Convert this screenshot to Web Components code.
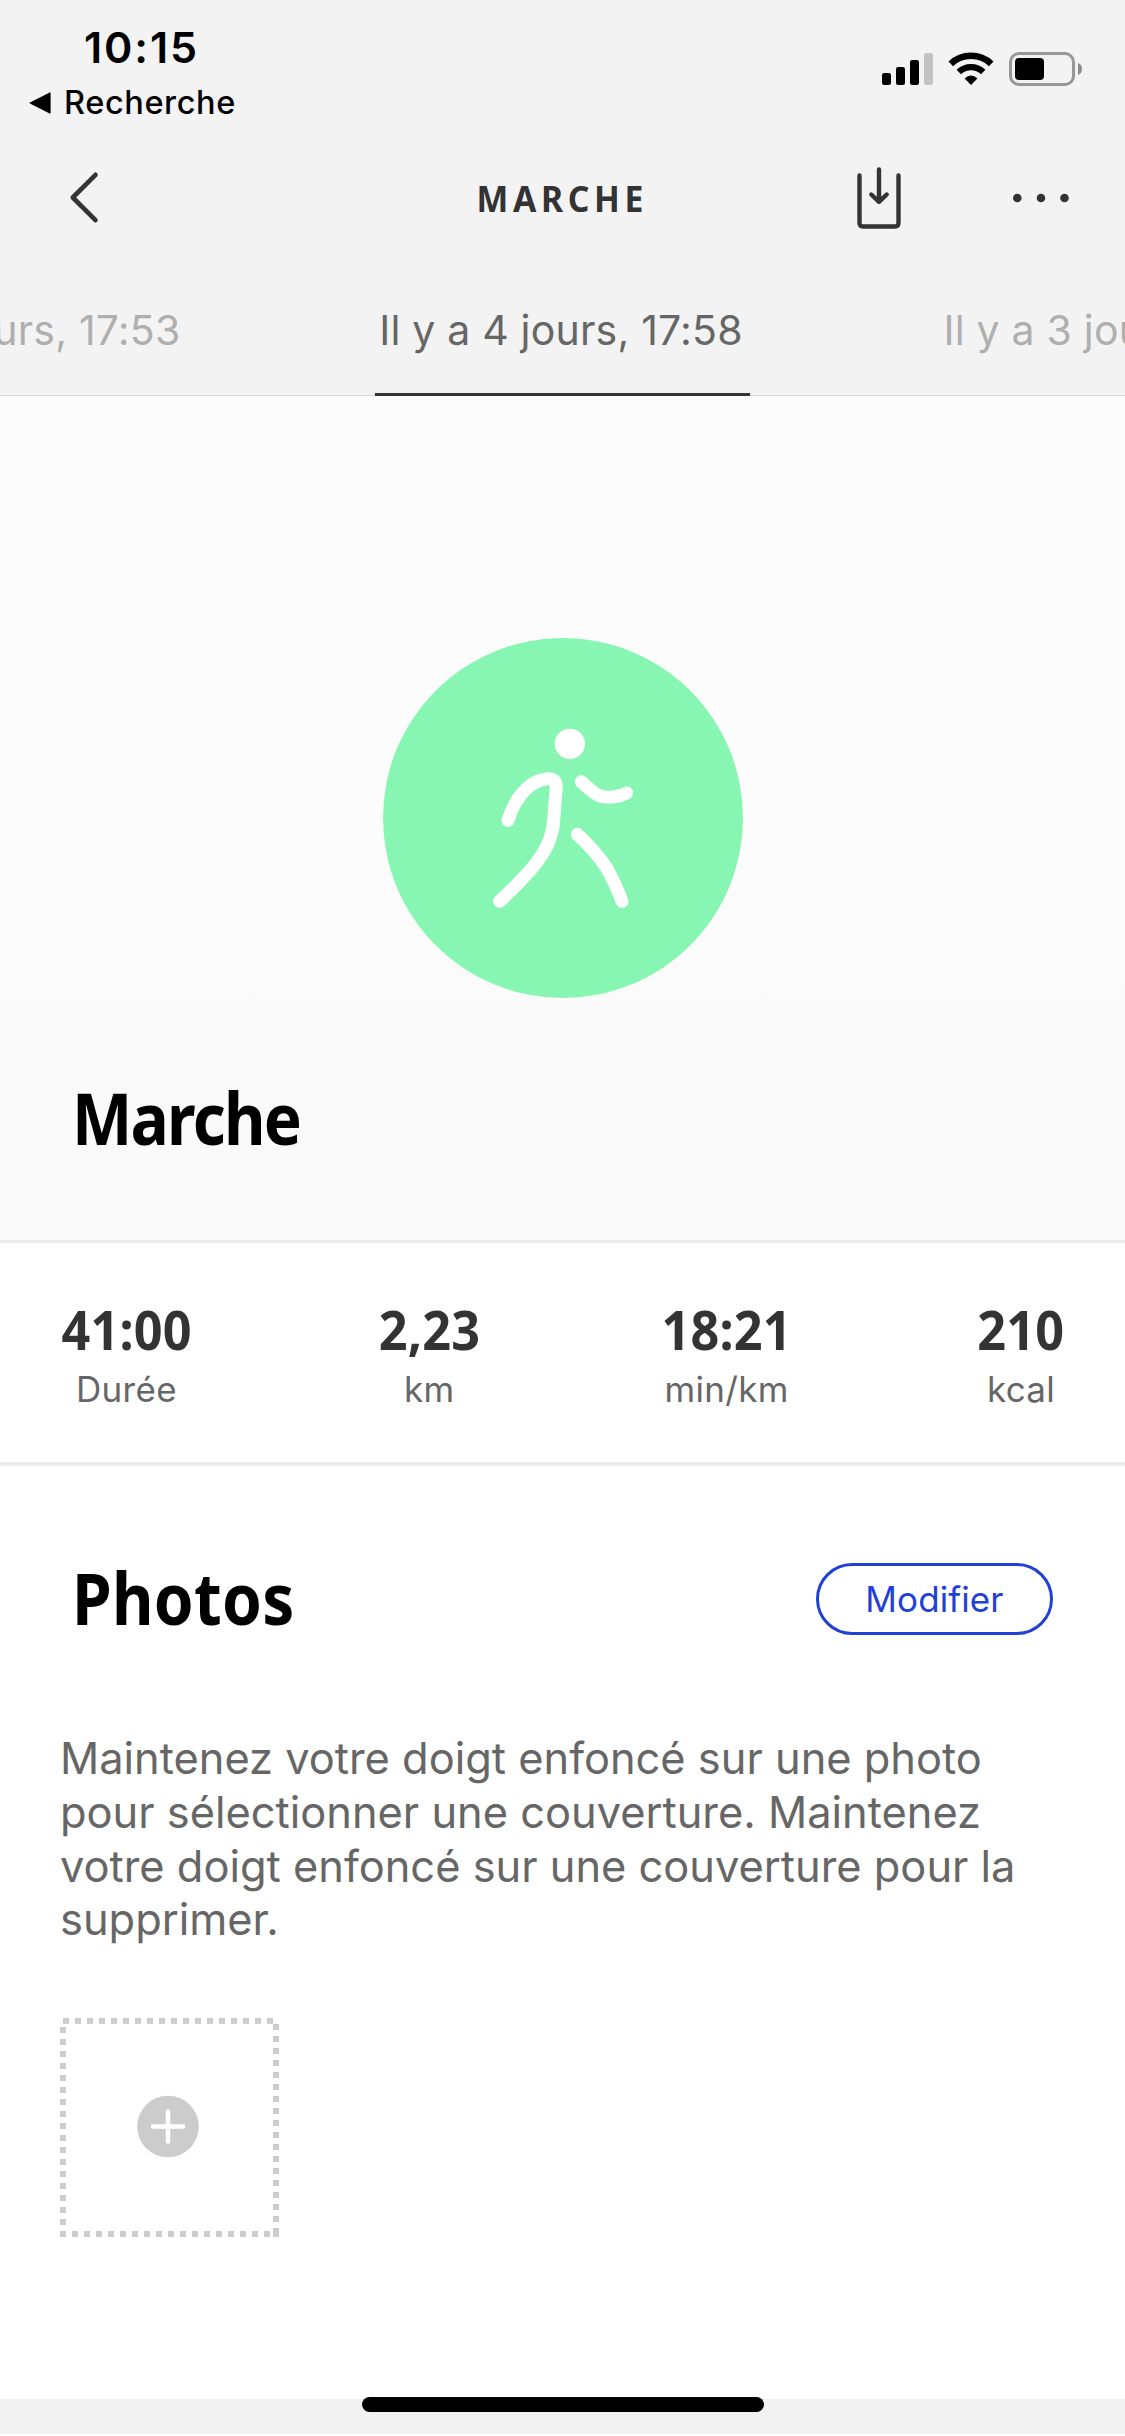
<!DOCTYPE html>
<html lang="fr">
<head>
<meta charset="utf-8">
<title>Marche</title>
<style>
  html, body { margin: 0; background: #fff; }
  body { width: 1125px; height: 2436px; overflow: hidden; font-family: Inter, "Liberation Sans", sans-serif; }
</style>
</head>
<body>
<activity-screen></activity-screen>
<script>
const define = (name, html, setup) => {
  const template = document.createElement('template');
  template.innerHTML = html;
  customElements.define(name, class extends HTMLElement {
    constructor() {
      super();
      this.attachShadow({ mode: 'open' }).append(template.content.cloneNode(true));
    }
    connectedCallback() { if (setup) setup(this, this.shadowRoot); }
  });
};

define('status-bar', `
<style>
  :host { display: flex; justify-content: space-between; align-items: flex-start; height: 140px; box-sizing: border-box; padding: 21px 42px 0 29px; color: #000; }
  .time { font-size: 43px; font-weight: 600; line-height: 52px; letter-spacing: 1.9px; padding-left: 55px; }
  .back { display: flex; align-items: center; gap: 13px; margin-top: 10px; font-size: 32.500px; font-weight: 480; line-height: 40px; letter-spacing: .6px; }
  svg { display: block; }
  .signals { margin-top: 30px; }
</style>
<div>
  <div class="time">10:15</div>
  <div class="back"><svg width="22" height="24" viewBox="0 0 22 24"><path d="M1.2 12 L21 2 V22 Z" stroke="#000" stroke-width="1.2" stroke-linejoin="round"/></svg><span>Recherche</span></div>
</div>
<svg class="signals" width="201" height="36" viewBox="882 51 201 36">
  <rect x="882" y="73" width="9" height="12" rx="2.2"/>
  <rect x="896" y="67" width="9" height="18" rx="2.2"/>
  <rect x="910" y="60" width="9" height="25" rx="2.2"/>
  <rect x="924" y="53" width="9" height="32" rx="2.2" fill="#c3c3c3"/>
  <path d="M950.8 63.8 A29.5 29.5 0 0 1 991.2 63.8" fill="none" stroke="#000" stroke-width="6.6"/>
  <path d="M958.8 72 A17.7 17.7 0 0 1 983.2 72" fill="none" stroke="#000" stroke-width="6.4"/>
  <path d="M964.6 78.6 Q971 72.4 977.4 78.6 L971 85 Z"/>
  <rect x="1010.5" y="53.5" width="63" height="31" rx="8.5" fill="none" stroke="#979797" stroke-width="3"/>
  <rect x="1015" y="58" width="29" height="22" rx="4"/>
  <path d="M1078 63 Q1082 64.5 1082 69 Q1082 73.500 1078 75 Z" fill="#8c8c8c"/>
</svg>`);

define('nav-bar', `
<style>
  :host { display: grid; grid-template-columns: 1fr auto 1fr; align-items: center; height: 115px; padding: 0 55px 0 68px; }
  svg { display: block; }
  .title { font: 700 35.5px/48px "Noto Sans", "Open Sans", sans-serif; letter-spacing: 4.9px; transform: scaleX(.95); color: #333; margin-left: -13px; }
  .actions { display: flex; align-items: center; justify-content: flex-end; gap: 110px; }
</style>
<svg width="34" height="56" viewBox="68 170 34 56" fill="none" stroke="#333" stroke-width="4.600" stroke-linecap="round" stroke-linejoin="round"><path d="M95.500 174.800 L72.800 197.500 L95.500 220.200"/></svg>
<div class="title"><slot></slot></div>
<div class="actions">
  <svg width="46" height="64" viewBox="856 165.500 46 64" fill="none" stroke="#333" stroke-width="4.400" stroke-linecap="round" stroke-linejoin="round"><path d="M859.500 175 V222.500 Q859.500 226 863 226 H895 Q898.500 226 898.500 222.500 V175"/><path d="M879 169 V201 M871.300 194 L879 201.300 L886.700 194"/></svg>
  <svg width="58" height="10" viewBox="1012 192.500 58 10" fill="#333"><circle cx="1017.300" cy="197.500" r="4.300"/><circle cx="1041" cy="197.500" r="4.300"/><circle cx="1064.500" cy="197.500" r="4.300"/></svg>
</div>`);

define('day-tab', `
<style>
  :host { display: block; flex: 0 0 375px; height: 141px; box-sizing: border-box; padding: 50px 3px 0 0; text-align: center; font-size: 41px; line-height: 50px; letter-spacing: .2px; color: #afafaf; white-space: nowrap; border-bottom: 3px solid transparent; }
  :host(:first-child) { padding: 50px 0 0 1px; }
  :host([selected]) { color: #666; border-bottom-color: #333; }
</style><slot></slot>`);

define('day-tabs', `
<style>
  :host { display: flex; justify-content: center; gap: 188.500px; height: 141px; overflow: hidden; background: linear-gradient(#d9d9d9, #d9d9d9) bottom / 100% 1px no-repeat; }
</style><slot></slot>`);

define('section-title', `
<style>
  :host { display: block; font: 700 71px/90px "Noto Sans", "Open Sans", sans-serif; letter-spacing: var(--tracking, 0); transform: scaleX(.9); transform-origin: left; color: #000; white-space: nowrap; }
</style><slot></slot>`);

define('activity-hero', `
<style>
  :host { display: flex; flex-direction: column; height: 844px; box-sizing: border-box; padding: 242px 72px 0; background: linear-gradient(#fcfcfc 45%, #f9f9f9); }
  svg { display: block; align-self: center; margin-bottom: 75px; margin-left: 1px; }
  section-title { --tracking: -1.9px; }
</style>
<svg width="360" height="360" viewBox="39 54 1080 1080">
  <circle cx="579" cy="594" r="540" fill="#88f6b3"/>
  <circle cx="599.500" cy="371.500" r="45.500" fill="#fff"/>
  <g fill="none" stroke="#fff" stroke-width="39" stroke-linecap="round" stroke-linejoin="round">
    <path d="M414 601 C437 525 485 479 534 476.500 Q560 476 558.500 503 L551 600 C548 690 478 760 389 844"/>
    <path d="M634 485 Q676 527 697 530 Q736 536 770 519"/>
    <path d="M622 643 Q681 698 711 746 Q739 796 756 844"/>
  </g>
</svg>
<section-title><slot></slot></section-title>`);

define('stat-item', `
<style>
  :host { display: flex; flex-direction: column; align-items: center; gap: 7px; white-space: nowrap; }
  .value { font: 700 53px/60px "Noto Sans", "Open Sans", sans-serif; letter-spacing: .2px; transform: scaleX(.95); color: #333; }
  .label { font-size: 35px; line-height: 44px; letter-spacing: .3px; color: #666; }
</style>
<div class="value"><slot></slot></div><div class="label"></div>`,
(host, root) => {
  host.style.width = host.getAttribute('width') + 'px';
  root.querySelector('.label').textContent = host.getAttribute('label');
});

define('stats-row', `
<style>
  :host { display: flex; justify-content: space-between; align-items: flex-start; height: 227px; box-sizing: border-box; padding: 57px 60px 0 61px; border-top: 3px solid #ebebeb; border-bottom: 5px solid #ebebeb; border-image: linear-gradient(#ebebeb 225px, #f3f3f3 225px) 3 0 5 0; background: #fff; }
</style><slot></slot>`);

define('pill-button', `
<style>
  :host { display: block; }
  button { display: flex; align-items: center; justify-content: center; width: 237px; height: 72px; margin: 2px 0 0; padding: 0; border: 3px solid #2140d6; border-radius: 36px; background: #fff; color: #2140d6; font: 400 35px/44px Inter, "Liberation Sans", sans-serif; letter-spacing: .1px; }
</style><button><slot></slot></button>`);

define('add-photo', `
<style>
  :host { display: block; width: 219px; height: 219px; }
  svg { display: block; }
</style>
<svg width="219" height="219" viewBox="0 0 219 219">
  <g stroke="#ccc" stroke-width="6" stroke-dasharray="6 6">
    <path d="M3 3 H213"/><path d="M216 6 V219"/><path d="M0 216 H210"/><path d="M3 9 V207"/>
  </g>
  <rect x="213" y="213" width="6" height="6" fill="#ccc"/>
  <circle cx="108" cy="108.500" r="30.800" fill="#ccc"/>
  <path d="M93 108.500 H123 M108 93.500 V123.500" stroke="#fff" stroke-width="4.600" stroke-linecap="round"/>
</svg>`);

define('photos-section', `
<style>
  :host { display: block; height: 932px; box-sizing: border-box; padding: 86px 60px 0; background: #fff; }
  header { display: flex; align-items: center; justify-content: space-between; padding: 0 12px 0 12px; }
  section-title { --tracking: .3px; }
  p { margin: 89px 0 71px; font-size: 43.400px; line-height: 53.800px; color: #666; }
</style>
<header><section-title>Photos</section-title><pill-button>Modifier</pill-button></header>
<p><slot></slot></p>
<add-photo></add-photo>`);

define('home-indicator', `
<style>
  :host { display: flex; justify-content: center; height: 35px; background: #f2f2f2; }
  div { width: 402px; height: 15px; border-radius: 8px; background: #000; margin-top: -2px; position: relative; left: .5px; }
</style><div></div>`);

define('activity-screen', `
<style>
  :host { display: block; width: 1125px; height: 2436px; }
  .top { background: #f3f3f3; }
</style>
<div class="top">
  <status-bar></status-bar>
  <nav-bar>MARCHE</nav-bar>
  <day-tabs>
    <day-tab>Il y a 5 jours, 17:53</day-tab>
    <day-tab selected>Il y a 4 jours, 17:58</day-tab>
    <day-tab>Il y a 3 jours, 17:55</day-tab>
  </day-tabs>
</div>
<activity-hero>Marche</activity-hero>
<stats-row>
  <stat-item width="131" label="Durée">41:00</stat-item>
  <stat-item width="94" label="km">2,23</stat-item>
  <stat-item width="120" label="min/km">18:21</stat-item>
  <stat-item width="88" label="kcal">210</stat-item>
</stats-row>
<photos-section>Maintenez votre doigt enfoncé sur une photo pour sélectionner une couverture. Maintenez votre doigt enfoncé sur une couverture pour la supprimer.</photos-section>
<home-indicator></home-indicator>`);
</script>
</body>
</html>
